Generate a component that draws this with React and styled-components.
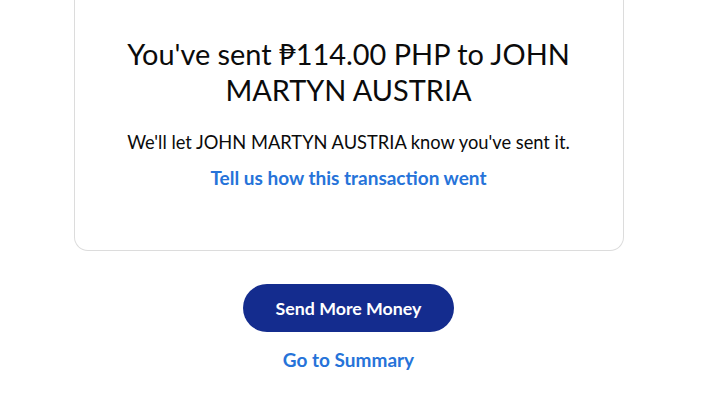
import React from 'react'
import styled, { createGlobalStyle } from 'styled-components'

const GlobalStyle = createGlobalStyle`
  html, body {
    margin: 0;
    padding: 0;
    background: #ffffff;
    font-family: "Lato", "Noto Sans", sans-serif;
    color: #001435;
  }
`

const Page = styled.main`
  display: flex;
  flex-direction: column;
  align-items: center;
  width: 697px;
`

const Card = styled.section`
  box-sizing: border-box;
  width: 550px;
  padding: 36px 30px 60px;
  border: 1px solid #dcdcdc;
  border-top: none;
  border-radius: 0 0 14px 14px;
  display: flex;
  flex-direction: column;
  align-items: center;
  text-align: center;
`

const Heading = styled.h1`
  margin: 0;
  font-size: 28.9px;
  line-height: 36px;
  font-weight: 400;
  color: #0b0b0b;
  max-width: 470px;
`

const Note = styled.p`
  margin: 22px 0 0;
  font-size: 18.3px;
  line-height: 24px;
  color: #0b0b0b;
`

const TextLink = styled.a`
  display: block;
  margin-top: ${p => p.$gap || '12px'};
  font-size: 19px;
  line-height: 24px;
  font-weight: 700;
  color: #2673d9;
  text-decoration: none;
  cursor: pointer;
`

const PrimaryButton = styled.button`
  margin-top: 33px;
  width: 211px;
  height: 48px;
  border: none;
  border-radius: 24px;
  background: #142c8e;
  color: #ffffff;
  font-family: inherit;
  font-size: 17.8px;
  font-weight: 700;
  cursor: pointer;
`

export default function App() {
  return (
    <>
      <GlobalStyle />
      <Page>
        <Card>
          <Heading>You've sent ₱114.00 PHP to JOHN MARTYN AUSTRIA</Heading>
          <Note>We'll let JOHN MARTYN AUSTRIA know you've sent it.</Note>
          <TextLink>Tell us how this transaction went</TextLink>
        </Card>
        <PrimaryButton>Send More Money</PrimaryButton>
        <TextLink $gap="16px">Go to Summary</TextLink>
      </Page>
    </>
  )
}
